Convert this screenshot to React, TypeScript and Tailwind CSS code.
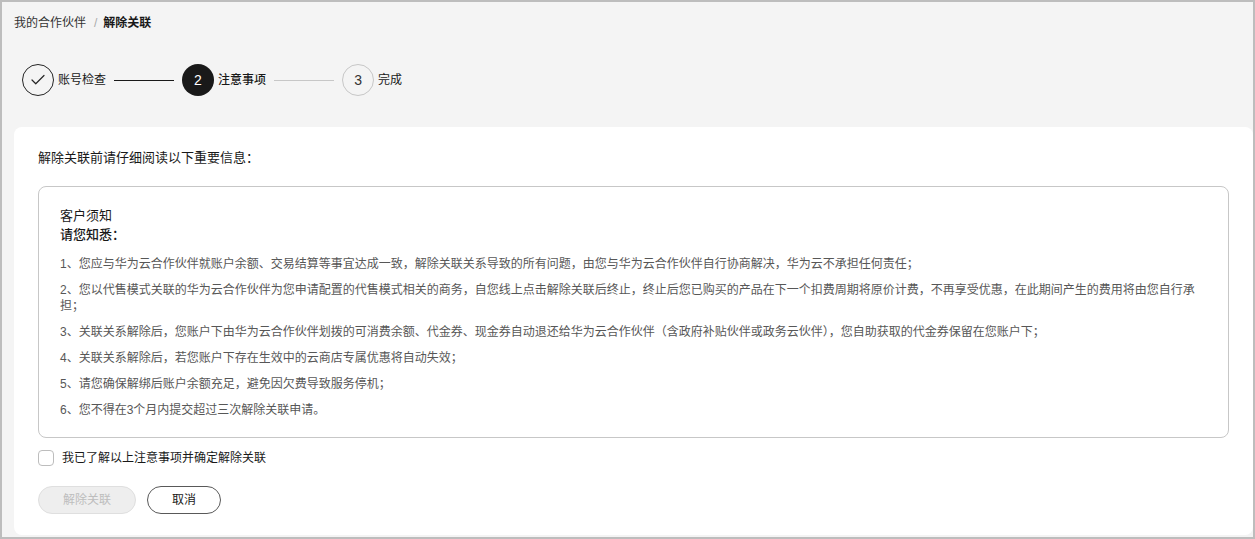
import { Check } from 'lucide-react'

const items = [
  '1、您应与华为云合作伙伴就账户余额、交易结算等事宜达成一致，解除关联关系导致的所有问题，由您与华为云合作伙伴自行协商解决，华为云不承担任何责任；',
  '2、您以代售模式关联的华为云合作伙伴为您申请配置的代售模式相关的商务，自您线上点击解除关联后终止，终止后您已购买的产品在下一个扣费周期将原价计费，不再享受优惠，在此期间产生的费用将由您自行承担；',
  '3、关联关系解除后，您账户下由华为云合作伙伴划拨的可消费余额、代金券、现金券自动退还给华为云合作伙伴（含政府补贴伙伴或政务云伙伴），您自助获取的代金券保留在您账户下；',
  '4、关联关系解除后，若您账户下存在生效中的云商店专属优惠将自动失效；',
  '5、请您确保解绑后账户余额充足，避免因欠费导致服务停机；',
  '6、您不得在3个月内提交超过三次解除关联申请。',
]

function Steps() {
  return (
    <div className="flex items-center h-8 pl-5">
      <div className="w-8 h-8 rounded-full border border-[#252525] flex items-center justify-center">
        <Check className="w-[18px] h-[18px] text-[#252525]" strokeWidth={1.6} />
      </div>
      <span className="ml-1 text-xs text-[#191919]">账号检查</span>
      <div className="mx-2 w-[60px] h-px bg-[#191919]" />
      <div className="w-8 h-8 rounded-full bg-[#191919] flex items-center justify-center text-white text-sm">2</div>
      <span className="ml-1 text-xs text-[#191919] font-medium">注意事项</span>
      <div className="mx-2 w-[60px] h-px bg-[#c7c7c7]" />
      <div className="w-8 h-8 rounded-full border border-[#c7c7c7] flex items-center justify-center text-[#333] text-sm">3</div>
      <span className="ml-1 text-xs text-[#191919]">完成</span>
    </div>
  )
}

export default function App() {
  return (
    <div
      className="w-[1255px] h-[539px] border-2 border-[#bdbdbd] bg-[#f4f4f4] flex flex-col overflow-hidden"
      style={{ fontFamily: '"Liberation Sans", "Noto Sans CJK SC", sans-serif' }}
    >
      <div className="pl-3 pt-3 flex items-center text-xs leading-[18px]">
        <span className="text-[#333]">我的合作伙伴</span>
        <span className="ml-2 mr-[6px] text-[#aaa]">/</span>
        <span className="text-[#191919] font-bold">解除关联</span>
      </div>

      <div className="mt-8">
        <Steps />
      </div>

      <div className="mt-[31px] ml-3 flex-1 mb-[2px] bg-white rounded-lg px-6 pt-[21px]">
        <div className="text-[13px] leading-5 text-[#191919]">解除关联前请仔细阅读以下重要信息：</div>

        <div className="mt-[18px] border border-[#c7c7c7] rounded-lg pl-[21px] pr-6 pt-[19px] pb-[19px]">
          <div className="text-[13px] leading-[19px] text-[#191919]">客户须知</div>
          <div className="text-[13px] leading-[19px] text-[#191919] font-medium">请您知悉：</div>
          <div className="mt-3 flex flex-col gap-[10px] text-xs leading-4 text-[#575757]">
            {items.map((t) => (
              <p key={t}>{t}</p>
            ))}
          </div>
        </div>

        <label className="mt-3 flex items-center gap-2 h-4">
          <span className="w-4 h-4 rounded border border-[#bdbdbd] bg-white" />
          <span className="text-xs text-[#191919]">我已了解以上注意事项并确定解除关联</span>
        </label>

        <div className="mt-5 flex items-center gap-[11px]">
          <button className="w-[98px] h-[28px] rounded-full bg-[#eeeeee] border border-[#dfdfdf] text-xs text-[#bdbdbd]">
            解除关联
          </button>
          <button className="w-[74px] h-[28px] rounded-full bg-white border border-[#595959] text-xs text-[#191919]">
            取消
          </button>
        </div>
      </div>
    </div>
  )
}
